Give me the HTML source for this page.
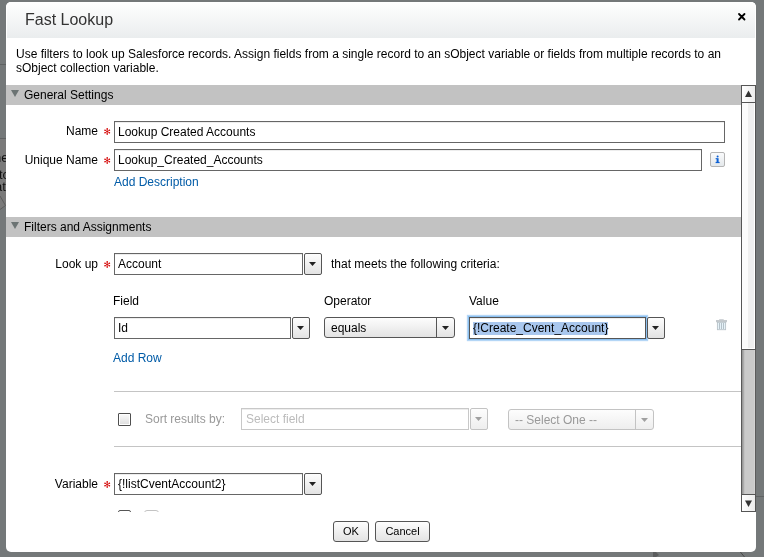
<!DOCTYPE html>
<html><head><meta charset="utf-8">
<style>
*{margin:0;padding:0;box-sizing:border-box}
html,body{width:764px;height:557px;overflow:hidden}
body{background:#747879;font-family:"Liberation Sans",sans-serif;font-size:12px;color:#000;position:relative}
.a{position:absolute}
.t{position:absolute;line-height:14px;white-space:pre;will-change:transform}
#dlg{position:absolute;left:6px;top:2px;width:750px;height:550px;background:#fff;border-radius:5px}
#hdr{position:absolute;left:6px;top:2px;width:750px;height:36px;background:linear-gradient(#fefefe,#eaedee);border:1px solid #fff;border-bottom:none;border-radius:5px 5px 0 0}
#clip{position:absolute;left:0;top:0;width:764px;height:557px;clip-path:inset(85px 0 45px 0)}
.sec{position:absolute;left:6px;width:735px;height:20px;background:#c2c2c2}
.tri{position:absolute;width:0;height:0;border-left:4px solid transparent;border-right:4px solid transparent;border-top:7px solid #6b7373}
.inp{position:absolute;border:1px solid #666;background:#fff;height:22px;box-shadow:inset 0 1px 0 #ededed}
.btn{position:absolute;border:1px solid #555;border-radius:2px;background:linear-gradient(#fdfdfd,#e3e3e3);width:18px;height:22px}
.arr{position:absolute;width:0;height:0;border-left:4px solid transparent;border-right:4px solid transparent;border-top:4px solid #222}
.lbl{text-align:right}
.lnk{color:#015ba7}
</style></head><body>
<!-- background page bits -->

<svg class="a" style="left:0;top:139px" width="6" height="75"><path d="M0 0H6V67L0 71Z" fill="#7a7a7a"/><path d="M0 57L5.5 66.5L0 70.5" stroke="#5a5a5a" stroke-width="0.9" fill="none"/></svg>
<div class="a" style="left:0;top:138px;width:6px;height:1px;background:#5f6263"></div>
<div class="a" style="left:0;top:64px;width:6px;height:1px;background:#5f6263"></div>
<div class="a" style="left:756px;top:496px;width:8px;height:1px;background:#5f6263"></div>

<svg class="a" style="left:738px;top:551px" width="10" height="6"><path d="M2 0.5L6.5 6" stroke="#4a4a4a" stroke-width="1"/></svg>
<svg class="a" style="left:652px;top:552px" width="9" height="5"><path d="M1 0H4L7 3L4 5H1Z" fill="#5a5c5d"/></svg>
<div class="t" style="left:-6px;top:150px;font-size:13px;line-height:15px;color:#111">ne</div>
<div class="t" style="left:-1px;top:167px;font-size:13px;line-height:15px;color:#111">to</div>
<div class="t" style="left:-5px;top:179px;font-size:13px;line-height:15px;color:#111">at</div>
<div id="dlg"></div>
<div id="hdr"></div>
<div class="t" style="left:25px;top:11px;font-size:16px;line-height:17px;color:#333">Fast Lookup</div>
<svg class="a" style="left:737px;top:12px" width="9" height="9" viewBox="0 0 9 9"><path d="M2 2L7.5 7.5M7.5 2L2 7.5" stroke="#000" stroke-width="1.8" stroke-linecap="round"/></svg>

<div class="t" style="left:16px;top:47px">Use filters to look up Salesforce records. Assign fields from a single record to an sObject variable or fields from multiple records to an
sObject collection variable.</div>

<div id="clip">
  <!-- General Settings -->
  <div class="sec" style="top:85px"></div>
  <div class="tri" style="left:11px;top:90px"></div>
  <div class="t" style="left:24px;top:88px">General Settings</div>

  <div class="t lbl" style="left:0;width:98px;top:124px">Name</div>
  <svg class="a" style="left:103px;top:127px" width="9" height="9" viewBox="0 0 9 9"><path d="M4.2 1.8V7.2M1.9 3.2L6.5 5.8M6.5 3.2L1.9 5.8" stroke="#d40000" stroke-width="0.7"/><g fill="#d40000"><circle cx="4.2" cy="1.9" r="0.8"/><circle cx="4.2" cy="7.1" r="0.8"/><circle cx="2" cy="3.2" r="0.8"/><circle cx="6.4" cy="3.2" r="0.8"/><circle cx="2" cy="5.8" r="0.8"/><circle cx="6.4" cy="5.8" r="0.8"/><circle cx="4.2" cy="4.5" r="0.7"/></g></svg>
  <div class="inp" style="left:114px;top:121px;width:611px"></div>
  <div class="t" style="left:118px;top:125px">Lookup Created Accounts</div>

  <div class="t lbl" style="left:0;width:98px;top:153px">Unique Name</div>
  <svg class="a" style="left:103px;top:156px" width="9" height="9" viewBox="0 0 9 9"><path d="M4.2 1.8V7.2M1.9 3.2L6.5 5.8M6.5 3.2L1.9 5.8" stroke="#d40000" stroke-width="0.7"/><g fill="#d40000"><circle cx="4.2" cy="1.9" r="0.8"/><circle cx="4.2" cy="7.1" r="0.8"/><circle cx="2" cy="3.2" r="0.8"/><circle cx="6.4" cy="3.2" r="0.8"/><circle cx="2" cy="5.8" r="0.8"/><circle cx="6.4" cy="5.8" r="0.8"/><circle cx="4.2" cy="4.5" r="0.7"/></g></svg>
  <div class="inp" style="left:114px;top:149px;width:588px"></div>
  <div class="t" style="left:118px;top:153px">Lookup_Created_Accounts</div>
  <div class="a" style="left:710px;top:152px;width:15px;height:15px;border:1px solid #b4b4b4;border-radius:2px;background:linear-gradient(#fafbfc,#e4e8eb)"></div>
  <svg class="a" style="left:710px;top:152px" width="15" height="15"><g fill="#0b5fd4"><circle cx="7.6" cy="4.6" r="1"/><rect x="6.6" y="6.2" width="2" height="4.6"/><rect x="5.6" y="6.2" width="1.5" height="1"/><rect x="5.6" y="9.9" width="4" height="1.2"/></g></svg>
  <div class="t lnk" style="left:114px;top:175px">Add Description</div>

  <!-- Filters and Assignments -->
  <div class="sec" style="top:217px"></div>
  <div class="tri" style="left:11px;top:222px"></div>
  <div class="t" style="left:24px;top:220px">Filters and Assignments</div>

  <div class="t lbl" style="left:0;width:98px;top:257px">Look up</div>
  <svg class="a" style="left:103px;top:260px" width="9" height="9" viewBox="0 0 9 9"><path d="M4.2 1.8V7.2M1.9 3.2L6.5 5.8M6.5 3.2L1.9 5.8" stroke="#d40000" stroke-width="0.7"/><g fill="#d40000"><circle cx="4.2" cy="1.9" r="0.8"/><circle cx="4.2" cy="7.1" r="0.8"/><circle cx="2" cy="3.2" r="0.8"/><circle cx="6.4" cy="3.2" r="0.8"/><circle cx="2" cy="5.8" r="0.8"/><circle cx="6.4" cy="5.8" r="0.8"/><circle cx="4.2" cy="4.5" r="0.7"/></g></svg>
  <div class="inp" style="left:114px;top:253px;width:189px"></div>
  <div class="t" style="left:118px;top:257px">Account</div>
  <div class="btn" style="left:304px;top:253px"><svg class="a" style="left:4px;top:8px" width="7" height="4"><path d="M0 0H7L3.5 4Z" fill="#222"/></svg></div>
  <div class="t" style="left:331px;top:257px">that meets the following criteria:</div>

  <div class="t" style="left:113px;top:294px">Field</div>
  <div class="t" style="left:324px;top:294px">Operator</div>
  <div class="t" style="left:469px;top:294px">Value</div>

  <div class="inp" style="left:114px;top:317px;width:177px"></div>
  <div class="t" style="left:118px;top:321px">Id</div>
  <div class="btn" style="left:292px;top:317px"><svg class="a" style="left:4px;top:8px" width="7" height="4"><path d="M0 0H7L3.5 4Z" fill="#222"/></svg></div>

  <div class="a" style="left:324px;top:317px;width:131px;height:21px;border:1px solid #555;border-radius:3px;background:linear-gradient(#fdfdfd,#e3e3e3)">
    <div class="a" style="left:111px;top:0;width:1px;height:19px;background:#555"></div>
    <svg class="a" style="left:117px;top:8px" width="7" height="4"><path d="M0 0H7L3.5 4Z" fill="#222"/></svg>
  </div>
  <div class="t" style="left:331px;top:321px">equals</div>

  <div class="inp" style="left:469px;top:317px;width:177px;border-color:#555;box-shadow:inset 0 1px 0 #ededed,0 0 0 1px #8cc0f0,0 0 1px 2px #b4d6f6"></div>
  <div class="a" style="left:473px;top:322px;width:135px;height:13px;background:#a9c7ee"></div>
  <div class="t" style="left:473px;top:321px">{!Create_Cvent_Account}</div>
  <div class="btn" style="left:647px;top:317px"><svg class="a" style="left:4px;top:8px" width="7" height="4"><path d="M0 0H7L3.5 4Z" fill="#222"/></svg></div>

  <svg class="a" style="left:715px;top:319px" width="13" height="13" viewBox="0 0 13 13">
    <rect x="4.2" y="0" width="4.5" height="1.2" fill="#d0d4d8"/>
    <rect x="1" y="1" width="11" height="2.2" fill="#c4c9cd"/>
    <rect x="2.4" y="3.3" width="8.2" height="7.4" fill="#e6f2f8" stroke="#b8c2c8" stroke-width="0.9"/>
    <rect x="4.1" y="4" width="0.9" height="6" fill="#aebbc3"/>
    <rect x="6.1" y="4" width="0.9" height="6" fill="#aebbc3"/>
    <rect x="8" y="4" width="0.9" height="6" fill="#aebbc3"/>
  </svg>

  <div class="t lnk" style="left:113px;top:351px">Add Row</div>

  <div class="a" style="left:114px;top:391px;width:627px;height:1px;background:#c4c4c4"></div>
  <div class="a" style="left:118px;top:413px;width:13px;height:13px;border:1px solid #4f4f4f;border-radius:1px;background:linear-gradient(#fbfbfb,#dedede);box-shadow:inset 0 0 0 1px #fff"></div>
  <div class="t" style="left:145px;top:412px;color:#999">Sort results by:</div>
  <div class="inp" style="left:241px;top:408px;width:228px;border-color:#c8c8c8"></div>
  <div class="t" style="left:246px;top:412px;color:#bbb">Select field</div>
  <div class="btn" style="left:470px;top:408px;border-color:#c3c3c3;background:linear-gradient(#fdfdfd,#eeeeee)"><svg class="a" style="left:4px;top:8px" width="7" height="4"><path d="M0 0H7L3.5 4Z" fill="#a0a0a0"/></svg></div>
  <div class="a" style="left:508px;top:409px;width:146px;height:21px;border:1px solid #c3c3c3;border-radius:3px;background:linear-gradient(#fdfdfd,#eeeeee)">
    <div class="a" style="left:126px;top:0;width:1px;height:19px;background:#c3c3c3"></div>
    <svg class="a" style="left:132px;top:8px" width="7" height="4"><path d="M0 0H7L3.5 4Z" fill="#a0a0a0"/></svg>
  </div>
  <div class="t" style="left:515px;top:413px;color:#999">-- Select One --</div>
  <div class="a" style="left:114px;top:446px;width:627px;height:1px;background:#c4c4c4"></div>

  <div class="t lbl" style="left:0;width:98px;top:477px">Variable</div>
  <svg class="a" style="left:103px;top:480px" width="9" height="9" viewBox="0 0 9 9"><path d="M4.2 1.8V7.2M1.9 3.2L6.5 5.8M6.5 3.2L1.9 5.8" stroke="#d40000" stroke-width="0.7"/><g fill="#d40000"><circle cx="4.2" cy="1.9" r="0.8"/><circle cx="4.2" cy="7.1" r="0.8"/><circle cx="2" cy="3.2" r="0.8"/><circle cx="6.4" cy="3.2" r="0.8"/><circle cx="2" cy="5.8" r="0.8"/><circle cx="6.4" cy="5.8" r="0.8"/><circle cx="4.2" cy="4.5" r="0.7"/></g></svg>
  <div class="inp" style="left:114px;top:473px;width:189px"></div>
  <div class="t" style="left:118px;top:477px">{!listCventAccount2}</div>
  <div class="btn" style="left:304px;top:473px"><svg class="a" style="left:4px;top:8px" width="7" height="4"><path d="M0 0H7L3.5 4Z" fill="#222"/></svg></div>

  <div class="a" style="left:118px;top:510px;width:13px;height:13px;border:1px solid #555;border-radius:2px"></div>
  <div class="a" style="left:144px;top:510px;width:15px;height:13px;border:1px solid #c3c3c3;border-radius:3px"></div>

  <!-- scrollbar -->
  <div class="a" style="left:741px;top:85px;width:15px;height:427px;background:linear-gradient(90deg,#999 0,#999 1px,#ababab 1px,#ababab 2px,#c2c2c2 2px,#c2c2c2 3px,#cacaca 3px,#cacaca 12px,#d2d2d2 12px);border-left:1px solid #595959;border-right:1px solid #5c5c5c"></div>
  <div class="a" style="left:741px;top:85px;width:15px;height:18px;border:1px solid #555;background:linear-gradient(90deg,#fff,#ececec)">
    <svg class="a" style="left:3px;top:4px" width="8" height="8"><path d="M0 7L3.5 0.5L7 7Z" fill="#333"/></svg>
  </div>
  <div class="a" style="left:741px;top:103px;width:15px;height:247px;border:1px solid #555;border-top:none;background:linear-gradient(90deg,#fbfbfb 0,#fbfbfb 6px,#efefef 6px,#efefef 12px,#fff 12px);box-shadow:inset 0 -1px 0 #fff"></div>
  <div class="a" style="left:741px;top:494px;width:15px;height:18px;border:1px solid #555;background:linear-gradient(90deg,#fff,#ececec)">
    <svg class="a" style="left:3px;top:5px" width="8" height="8"><path d="M0 0.5L3.5 7L7 0.5Z" fill="#333"/></svg>
  </div>
</div>

<div class="a" style="left:333px;top:521px;width:36px;height:21px;border:1px solid #555;border-radius:3px;background:linear-gradient(#fdfdfd,#e3e3e3)"></div>
<div class="t" style="left:333px;top:524px;width:36px;text-align:center;font-size:11px">OK</div>
<div class="a" style="left:375px;top:521px;width:55px;height:21px;border:1px solid #555;border-radius:3px;background:linear-gradient(#fdfdfd,#e3e3e3)"></div>
<div class="t" style="left:375px;top:524px;width:55px;text-align:center;font-size:11px">Cancel</div>
</body></html>
